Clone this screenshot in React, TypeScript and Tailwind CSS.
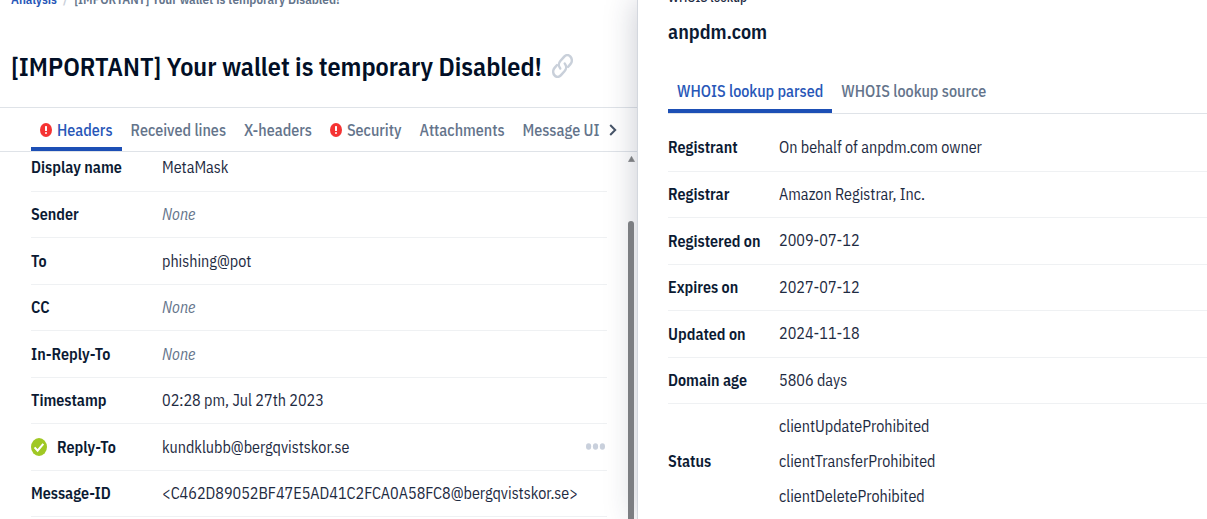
import type { ReactNode } from "react";

const SUBJECT = "[IMPORTANT] Your wallet is temporary Disabled!";

type HeaderRow = { label: string; value: string | null; verified?: boolean };

const headerRows: HeaderRow[] = [
  { label: "Display name", value: "MetaMask" },
  { label: "Sender", value: null },
  { label: "To", value: "phishing@pot" },
  { label: "CC", value: null },
  { label: "In-Reply-To", value: null },
  { label: "Timestamp", value: "02:28 pm, Jul 27th 2023" },
  { label: "Reply-To", value: "kundklubb@bergqvistskor.se", verified: true },
  { label: "Message-ID", value: "<C462D89052BF47E5AD41C2FCA0A58FC8@bergqvistskor.se>" },
];

const whoisRows: { label: string; values: string[] }[] = [
  { label: "Registrant", values: ["On behalf of anpdm.com owner"] },
  { label: "Registrar", values: ["Amazon Registrar, Inc."] },
  { label: "Registered on", values: ["2009-07-12"] },
  { label: "Expires on", values: ["2027-07-12"] },
  { label: "Updated on", values: ["2024-11-18"] },
  { label: "Domain age", values: ["5806 days"] },
  {
    label: "Status",
    values: ["clientUpdateProhibited", "clientTransferProhibited", "clientDeleteProhibited"],
  },
];

const tabs: { label: string; alert?: boolean; active?: boolean }[] = [
  { label: "Headers", alert: true, active: true },
  { label: "Received lines" },
  { label: "X-headers" },
  { label: "Security", alert: true },
  { label: "Attachments" },
  { label: "Message UI" },
];

function AlertIcon() {
  return (
    <svg viewBox="0 0 12 14" className="h-3.5 w-3 shrink-0" aria-hidden="true">
      <ellipse cx="6" cy="7" rx="6" ry="7" fill="#f53333" />
      <rect x="5" y="3" width="2" height="5" rx="0.6" fill="#fff" />
      <ellipse cx="6" cy="10" rx="1" ry="1.1" fill="#fff" />
    </svg>
  );
}

function CheckIcon() {
  return (
    <svg viewBox="0 0 16 18" className="h-[18px] w-4 shrink-0" aria-hidden="true">
      <ellipse cx="8" cy="9" rx="8" ry="9" fill="#a0c824" />
      <path d="M3.6 9.4l3 3.3 5.7-6.9" fill="none" stroke="#fff" strokeWidth="2.1" />
    </svg>
  );
}

function LinkIcon() {
  return (
    <svg
      viewBox="1 1 22 22"
      preserveAspectRatio="none"
      className="h-6 w-[21px]"
      fill="none"
      stroke="#c9d0da"
      strokeWidth="2.5"
      strokeLinecap="round"
      aria-hidden="true"
    >
      <path d="M9.6 14.2a4.9 4.9 0 0 1 .2-6.9l3.9-3.8a4.7 4.7 0 0 1 6.7 6.7l-2.6 2.6" />
      <path d="M14.4 9.8a4.9 4.9 0 0 1-.2 6.9l-3.9 3.8a4.7 4.7 0 0 1-6.7-6.7l2.6-2.6" />
    </svg>
  );
}

function Label({ children }: { children: ReactNode }) {
  return (
    <th scope="row" className="p-0 text-left align-middle font-semibold text-[#0b1a33]">
      {children}
    </th>
  );
}

function EmailView() {
  return (
    <main className="flex w-[637px] shrink-0 flex-col">
      <nav aria-label="Breadcrumb" className="h-[19px] overflow-hidden px-[11px]">
        <ol className="-mt-2.5 flex gap-1.5 text-[13px] leading-5 font-semibold">
          <li>
            <a href="#analysis" className="text-[#2857b8]">Analysis</a>
          </li>
          <li aria-hidden="true" className="text-[#c9d0da]">/</li>
          <li className="text-[#64748b]">{SUBJECT}</li>
        </ol>
      </nav>
      <div className="flex h-[88px] items-center gap-2.5 px-[11px] pt-1.5">
        <h1 className="text-[26px] leading-8 font-semibold whitespace-nowrap text-[#020f26]">{SUBJECT}</h1>
        <button type="button" aria-label="Copy link">
          <LinkIcon />
        </button>
      </div>
      <div className="flex h-[45px] items-center border-y border-[#dfe3e8] pl-[31px]">
        <div role="tablist" aria-label="Email details" className="flex h-full">
          {tabs.map((tab) => (
            <button
              key={tab.label}
              type="button"
              role="tab"
              aria-selected={!!tab.active}
              className={
                tab.active
                  ? "flex items-center gap-[5px] border-b-4 border-[#1d4fb5] px-[9px] pt-1 text-base font-medium whitespace-nowrap text-[#2857b8]"
                  : "flex items-center gap-[5px] px-[9px] text-base font-medium whitespace-nowrap text-[#64748b]"
              }
            >
              {tab.alert && <AlertIcon />}
              {tab.label}
            </button>
          ))}
        </div>
        <button type="button" aria-label="More tabs" className="shrink-0">
          <svg viewBox="0 0 8 12" className="h-3 w-2" aria-hidden="true">
            <path d="M1.2 1l5 5-5 5" fill="none" stroke="#475569" strokeWidth="2" />
          </svg>
        </button>
      </div>
      <div className="min-h-0 flex-1 overflow-hidden pr-[30px] pl-[31px]">
        <table className="-mt-2 w-full border-collapse text-base leading-5 text-[#1e2b42]">
          <tbody>
            {headerRows.map((row) => (
              <tr key={row.label} className="border-b border-[#eff1f3] odd:h-[47px] even:h-[46px]">
                <Label>
                  <span className="flex w-[131px] items-center gap-2.5">
                    {row.verified && <CheckIcon />}
                    {row.label}
                  </span>
                </Label>
                <td className="w-full p-0 whitespace-nowrap">
                  <span className="flex items-center justify-between">
                    {row.value ?? <em className="text-[#64748b]">None</em>}
                    {row.verified && (
                      <button type="button" aria-label="More actions" className="pr-0.5">
                        <svg viewBox="0 0 19 7" className="h-[7px] w-[19px]" fill="#c9d0dc" aria-hidden="true">
                          <ellipse cx="2.6" cy="3.5" rx="2.6" ry="3.2" />
                          <ellipse cx="9.5" cy="3.5" rx="2.6" ry="3.2" />
                          <ellipse cx="16.4" cy="3.5" rx="2.6" ry="3.2" />
                        </svg>
                      </button>
                    )}
                  </span>
                </td>
              </tr>
            ))}
          </tbody>
        </table>
      </div>
    </main>
  );
}

function ScrollTrack() {
  return (
    <div aria-hidden="true" className="absolute top-[152px] right-full bottom-0 flex w-3.5 flex-col items-center pt-1">
      <svg viewBox="0 0 7 6" className="h-1.5 w-[7px]">
        <path d="M3.5 0.3L6.6 5.7H0.4z" fill="#7b7d80" stroke="#7b7d80" strokeWidth="0.5" strokeLinejoin="round" />
      </svg>
      <div className="mt-[59px] w-1.5 flex-1 rounded-t-full bg-[#7c7e82]" />
    </div>
  );
}

function WhoisDrawer() {
  return (
    <aside className="relative z-10 min-w-0 flex-1 border-l border-[#d3d7de] bg-white pl-[30px] shadow-[0_0_30px_rgba(30,41,70,0.25)]">
      <ScrollTrack />
      <div className="h-[13px] overflow-hidden">
        <p className="-mt-2.5 text-[13px] leading-4 font-medium text-[#1e2b42]">WHOIS lookup</p>
      </div>
      <h2 className="mt-[5px] text-xl leading-7 font-semibold text-[#0b1a33]">anpdm.com</h2>
      <div role="tablist" aria-label="WHOIS views" className="mt-6 flex h-11 border-b border-[#dfe3e8] text-base font-medium">
        <button
          type="button"
          role="tab"
          aria-selected="true"
          className="border-b-4 border-[#1d4fb5] px-[9px] pt-0.5 whitespace-nowrap text-[#2857b8]"
        >
          WHOIS lookup parsed
        </button>
        <button type="button" role="tab" aria-selected="false" className="px-[9px] pb-0.5 whitespace-nowrap text-[#64748b]">
          WHOIS lookup source
        </button>
      </div>
      <table className="mt-2.5 w-full border-collapse text-base leading-5 text-[#1e2b42]">
        <tbody>
          {whoisRows.map((row) => (
            <tr key={row.label} className="border-b border-[#eff1f3] odd:h-[47px] even:h-[46px]">
              <Label>
                <span className="block w-[111px] whitespace-nowrap">{row.label}</span>
              </Label>
              <td className="w-full p-0 py-[5px]">
                <ul className="leading-[35px]">
                  {row.values.map((value) => (
                    <li key={value}>{value}</li>
                  ))}
                </ul>
              </td>
            </tr>
          ))}
        </tbody>
      </table>
    </aside>
  );
}

export default function App() {
  return (
    <div className="flex h-screen overflow-hidden bg-white font-['IBM_Plex_Sans_Condensed','Roboto_Condensed',Roboto,sans-serif]">
      <EmailView />
      <WhoisDrawer />
    </div>
  );
}
